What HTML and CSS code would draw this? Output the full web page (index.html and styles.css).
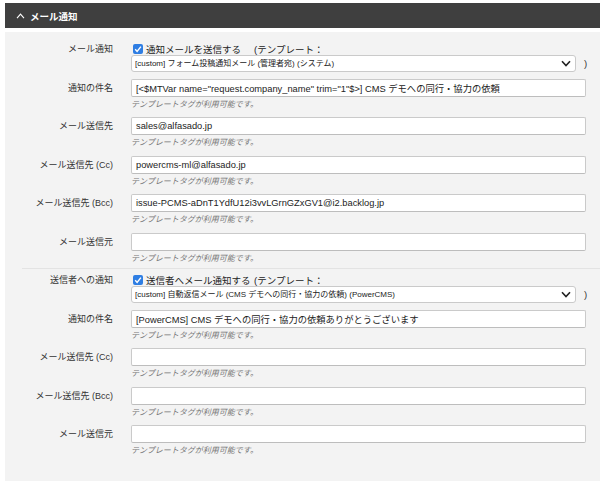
FILE: index.html
```html
<!DOCTYPE html>
<html lang="ja">
<head>
<meta charset="UTF-8" />
<title>メール通知</title>
<link rel="stylesheet" href="styles.css">
</head>
<body>

<div class="section-head">
  <svg class="head-toggle" width="9" height="6" viewBox="0 0 9 6"><polyline points="1,5.2 4.5,1.2 8,5.2" fill="none" stroke="#fff" stroke-width="1.1"/></svg>
  <span>メール通知</span>
</div>

<div class="panel">
  <!-- 管理者向け -->
  <div class="group">
    <div class="field field-check">
      <div class="field-label">メール通知</div>
      <div class="check-line">
        <span class="checkbox"><svg width="10" height="10" viewBox="0 0 10 10"><polyline points="2.2,5.3 4.1,7.4 7.9,2.6" fill="none" stroke="#fff" stroke-width="1.4"/></svg></span>
        <span class="check-text">通知メールを送信する</span>
        <span>(テンプレート：</span>
      </div>
      <div class="select-line">
        <span class="select-wrap">
          <select class="select"><option>[custom] フォーム投稿通知メール (管理者宛) (システム)</option></select>
          <svg class="select-arrow" width="10" height="7" viewBox="0 0 10 7"><polyline points="1,1.2 5,5.6 9,1.2" fill="none" stroke="#222" stroke-width="1.6"/></svg>
        </span>
        <span class="paren">)</span>
      </div>
    </div>

    <div class="field">
      <div class="field-label">通知の件名</div>
      <input class="text-input" type="text" value="[&lt;$MTVar name=&quot;request.company_name&quot; trim=&quot;1&quot;$&gt;] CMS デモへの同行・協力の依頼">
      <div class="hint">テンプレートタグが利用可能です。</div>
    </div>
    <div class="field">
      <div class="field-label">メール送信先</div>
      <input class="text-input" type="text" value="sales@alfasado.jp">
      <div class="hint">テンプレートタグが利用可能です。</div>
    </div>
    <div class="field">
      <div class="field-label">メール送信先 (Cc)</div>
      <input class="text-input" type="text" value="powercms-ml@alfasado.jp">
      <div class="hint">テンプレートタグが利用可能です。</div>
    </div>
    <div class="field">
      <div class="field-label">メール送信先 (Bcc)</div>
      <input class="text-input" type="text" value="issue-PCMS-aDnT1YdfU12i3vvLGrnGZxGV1@i2.backlog.jp">
      <div class="hint">テンプレートタグが利用可能です。</div>
    </div>
    <div class="field">
      <div class="field-label">メール送信元</div>
      <input class="text-input" type="text" value="">
      <div class="hint">テンプレートタグが利用可能です。</div>
    </div>
  </div>

  <hr class="divider">

  <!-- 送信者向け -->
  <div class="group">
    <div class="field field-check">
      <div class="field-label">送信者への通知</div>
      <div class="check-line">
        <span class="checkbox"><svg width="10" height="10" viewBox="0 0 10 10"><polyline points="2.2,5.3 4.1,7.4 7.9,2.6" fill="none" stroke="#fff" stroke-width="1.4"/></svg></span>
        <span class="check-text">送信者へメール通知する</span>
        <span>(テンプレート：</span>
      </div>
      <div class="select-line">
        <span class="select-wrap">
          <select class="select"><option>[custom] 自動返信メール (CMS デモへの同行・協力の依頼) (PowerCMS)</option></select>
          <svg class="select-arrow" width="10" height="7" viewBox="0 0 10 7"><polyline points="1,1.2 5,5.6 9,1.2" fill="none" stroke="#222" stroke-width="1.6"/></svg>
        </span>
        <span class="paren">)</span>
      </div>
    </div>

    <div class="field">
      <div class="field-label">通知の件名</div>
      <input class="text-input" type="text" value="[PowerCMS] CMS デモへの同行・協力の依頼ありがとうございます">
      <div class="hint">テンプレートタグが利用可能です。</div>
    </div>
    <div class="field">
      <div class="field-label">メール送信先 (Cc)</div>
      <input class="text-input" type="text" value="">
      <div class="hint">テンプレートタグが利用可能です。</div>
    </div>
    <div class="field">
      <div class="field-label">メール送信先 (Bcc)</div>
      <input class="text-input" type="text" value="">
      <div class="hint">テンプレートタグが利用可能です。</div>
    </div>
    <div class="field">
      <div class="field-label">メール送信元</div>
      <input class="text-input" type="text" value="">
      <div class="hint">テンプレートタグが利用可能です。</div>
    </div>
  </div>
</div>

</body>
</html>
```

FILE: styles.css
```css
body {
  margin: 0;
  background: #fff;
  color: #333;
  font-family: "Liberation Sans", "Noto Sans CJK JP", sans-serif;
}

/* --- 見出しバー --- */
.section-head {
  margin: 3px 0 0 5px;
  height: 25px;
  background: #3f3f3f;
  color: #fff;
  display: flex;
  align-items: center;
  gap: 5px;
  padding-left: 11px;
  font-size: 9.5px;
  font-weight: bold;
}

/* --- パネル --- */
.panel {
  margin: 4px 0 0 5px;
  background: #f3f3f3;
  padding: 11px 0 22px;
}

.field {
  display: grid;
  grid-template-columns: 108px 455px;
  column-gap: 18px;
  margin-bottom: 4.5px;
}
.group .field:last-child {
  margin-bottom: 0;
}

.field-label {
  text-align: right;
  font-size: 9px;
  line-height: 12px;
  align-self: center;
  color: #333;
}

.text-input {
  box-sizing: border-box;
  width: 100%;
  height: 18px;
  margin: 0;
  padding: 0 4px;
  border: 1px solid #cacaca;
  border-bottom-color: #bdbdbd;
  border-radius: 2px;
  background: #fff;
  color: #222;
  font-family: "Liberation Sans", "Noto Sans CJK JP", sans-serif;
  font-size: 9.3px;
  outline: none;
}

.hint {
  grid-column: 2;
  font-size: 8px;
  line-height: 16px;
  font-style: italic;
  color: #777;
}

/* --- チェックボックス行 --- */
.field-check {
  margin-bottom: 6.5px;
}
.field-check .field-label {
  grid-row: 1;
  align-self: start;
}
.check-line {
  display: flex;
  align-items: center;
  height: 12px;
  font-size: 9.5px;
  color: #222;
}
.checkbox {
  width: 10px;
  height: 10px;
  margin: 0 3px 0 2px;
  border-radius: 2px;
  background: #2f7ee3;
  display: flex;
}
.check-text {
  width: 108px;
}

.select-line {
  grid-column: 2;
  display: flex;
  align-items: center;
}
.select-wrap {
  position: relative;
  display: flex;
}
.select {
  appearance: none;
  box-sizing: border-box;
  width: 445px;
  height: 17px;
  margin: 0;
  padding: 0 3px;
  border: 1px solid #cacaca;
  border-radius: 3px;
  background: #fff;
  color: #222;
  font-family: "Liberation Sans", "Noto Sans CJK JP", sans-serif;
  font-size: 8px;
}
.select-arrow {
  position: absolute;
  right: 5px;
  top: 5px;
}
.paren {
  margin-left: 8px;
  font-size: 9.5px;
}

.divider {
  border: 0;
  border-top: 1px solid #e3e3e3;
  margin: 1px 0 5.5px 17px;
}
```
